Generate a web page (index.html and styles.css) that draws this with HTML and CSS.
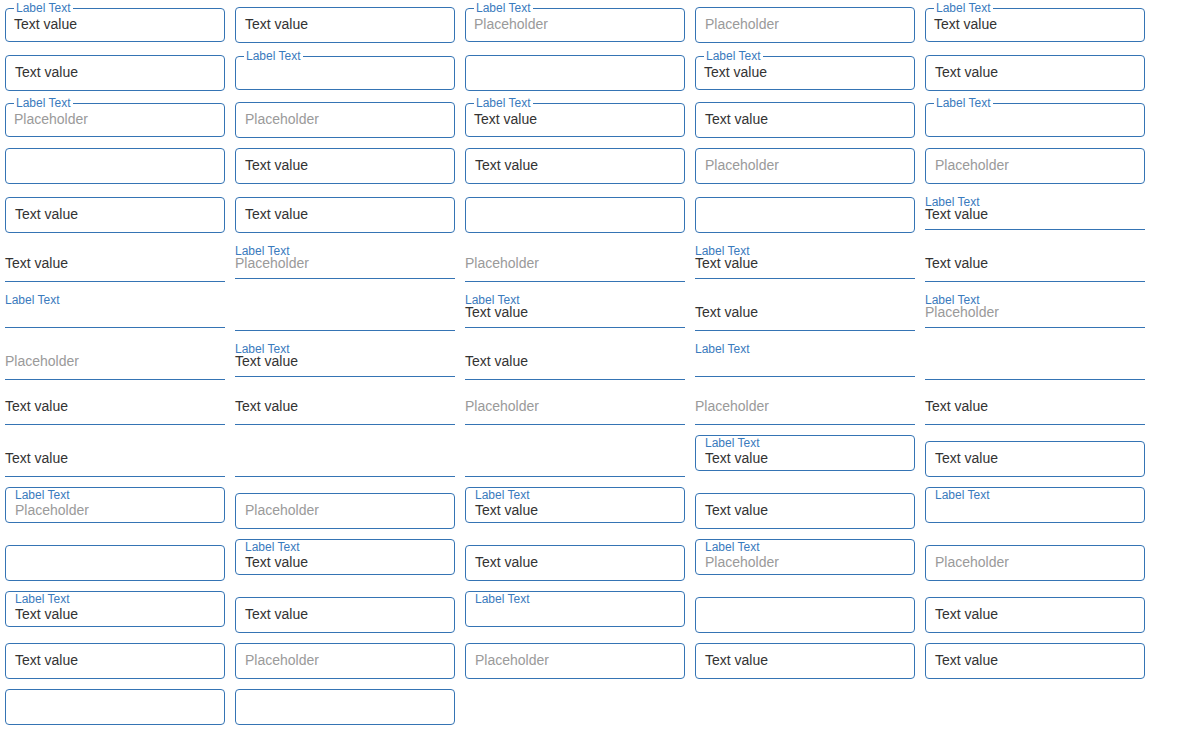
FILE: index.html
```html
<!DOCTYPE html>
<html lang="en">
<head>
<meta charset="utf-8">
<title>Text fields</title>
<link rel="stylesheet" href="styles.css">
</head>
<body>
<main class="grid">
  <!-- row 1 -->
  <fieldset class="f ol"><legend>Label Text</legend><div class="v">Text value</div></fieldset>
  <div class="f o"><div class="v">Text value</div></div>
  <fieldset class="f ol"><legend>Label Text</legend><div class="v ph">Placeholder</div></fieldset>
  <div class="f o"><div class="v ph">Placeholder</div></div>
  <fieldset class="f ol"><legend>Label Text</legend><div class="v">Text value</div></fieldset>
  <!-- row 2 -->
  <div class="f o"><div class="v">Text value</div></div>
  <fieldset class="f ol"><legend>Label Text</legend><div class="v"></div></fieldset>
  <div class="f o"><div class="v"></div></div>
  <fieldset class="f ol"><legend>Label Text</legend><div class="v">Text value</div></fieldset>
  <div class="f o"><div class="v">Text value</div></div>
  <!-- row 3 -->
  <fieldset class="f ol"><legend>Label Text</legend><div class="v ph">Placeholder</div></fieldset>
  <div class="f o"><div class="v ph">Placeholder</div></div>
  <fieldset class="f ol"><legend>Label Text</legend><div class="v">Text value</div></fieldset>
  <div class="f o"><div class="v">Text value</div></div>
  <fieldset class="f ol"><legend>Label Text</legend><div class="v"></div></fieldset>
  <!-- row 4 -->
  <div class="f o"><div class="v"></div></div>
  <div class="f o"><div class="v">Text value</div></div>
  <div class="f o"><div class="v">Text value</div></div>
  <div class="f o"><div class="v ph">Placeholder</div></div>
  <div class="f o"><div class="v ph">Placeholder</div></div>
  <!-- row 5 -->
  <div class="f o"><div class="v">Text value</div></div>
  <div class="f o"><div class="v">Text value</div></div>
  <div class="f o"><div class="v"></div></div>
  <div class="f o"><div class="v"></div></div>
  <div class="f ul"><label class="lb">Label Text</label><div class="v">Text value</div></div>
  <!-- row 6 -->
  <div class="f u"><div class="v">Text value</div></div>
  <div class="f ul"><label class="lb">Label Text</label><div class="v ph">Placeholder</div></div>
  <div class="f u"><div class="v ph">Placeholder</div></div>
  <div class="f ul"><label class="lb">Label Text</label><div class="v">Text value</div></div>
  <div class="f u"><div class="v">Text value</div></div>
  <!-- row 7 -->
  <div class="f ul"><label class="lb">Label Text</label><div class="v"></div></div>
  <div class="f u"><div class="v"></div></div>
  <div class="f ul"><label class="lb">Label Text</label><div class="v">Text value</div></div>
  <div class="f u"><div class="v">Text value</div></div>
  <div class="f ul"><label class="lb">Label Text</label><div class="v ph">Placeholder</div></div>
  <!-- row 8 -->
  <div class="f u"><div class="v ph">Placeholder</div></div>
  <div class="f ul"><label class="lb">Label Text</label><div class="v">Text value</div></div>
  <div class="f u"><div class="v">Text value</div></div>
  <div class="f ul"><label class="lb">Label Text</label><div class="v"></div></div>
  <div class="f u"><div class="v"></div></div>
  <!-- row 9 -->
  <div class="f u"><div class="v">Text value</div></div>
  <div class="f u"><div class="v">Text value</div></div>
  <div class="f u"><div class="v ph">Placeholder</div></div>
  <div class="f u"><div class="v ph">Placeholder</div></div>
  <div class="f u"><div class="v">Text value</div></div>
  <!-- row 10 -->
  <div class="f u"><div class="v">Text value</div></div>
  <div class="f u"><div class="v"></div></div>
  <div class="f u"><div class="v"></div></div>
  <div class="f il"><label class="lb">Label Text</label><div class="v">Text value</div></div>
  <div class="f o"><div class="v">Text value</div></div>
  <!-- row 11 -->
  <div class="f il"><label class="lb">Label Text</label><div class="v ph">Placeholder</div></div>
  <div class="f o"><div class="v ph">Placeholder</div></div>
  <div class="f il"><label class="lb">Label Text</label><div class="v">Text value</div></div>
  <div class="f o"><div class="v">Text value</div></div>
  <div class="f il"><label class="lb">Label Text</label><div class="v"></div></div>
  <!-- row 12 -->
  <div class="f o"><div class="v"></div></div>
  <div class="f il"><label class="lb">Label Text</label><div class="v">Text value</div></div>
  <div class="f o"><div class="v">Text value</div></div>
  <div class="f il"><label class="lb">Label Text</label><div class="v ph">Placeholder</div></div>
  <div class="f o"><div class="v ph">Placeholder</div></div>
  <!-- row 13 -->
  <div class="f il"><label class="lb">Label Text</label><div class="v">Text value</div></div>
  <div class="f o"><div class="v">Text value</div></div>
  <div class="f il"><label class="lb">Label Text</label><div class="v"></div></div>
  <div class="f o"><div class="v"></div></div>
  <div class="f o"><div class="v">Text value</div></div>
  <!-- row 14 -->
  <div class="f o"><div class="v">Text value</div></div>
  <div class="f o"><div class="v ph">Placeholder</div></div>
  <div class="f o"><div class="v ph">Placeholder</div></div>
  <div class="f o"><div class="v">Text value</div></div>
  <div class="f o"><div class="v">Text value</div></div>
  <!-- row 15 -->
  <div class="f o"><div class="v"></div></div>
  <div class="f o"><div class="v"></div></div>
</main>
</body>
</html>
```
FILE: styles.css
```css
html, body {
  margin: 0;
  padding: 0;
  background: #ffffff;
}

body {
  font-family: "Liberation Sans", Arial, sans-serif;
  color: #333333;
}

.grid {
  display: grid;
  grid-template-columns: repeat(5, 220px);
  column-gap: 10px;
  row-gap: 10px;
  align-items: last baseline;
  padding: 5.5px 5px 5px;
}

.f {
  box-sizing: border-box;
  min-width: 0;
  width: 220px;
}

.v {
  font-size: 14px;
  color: #333333;
  white-space: nowrap;
}

.v:empty::before {
  content: "\200b";
}

.v.ph {
  color: #9a9a9a;
}

.lb {
  display: block;
  font-size: 12px;
  line-height: 13px;
  color: #3a7bbd;
  white-space: nowrap;
}

/* outlined, no label */
.o {
  border: 1px solid #3574b4;
  border-radius: 4px;
  padding: 0 9px 1px;
}

.o .v {
  line-height: 33px;
}

/* outlined, notched legend */
.ol {
  margin: -3.5px 0 0;
  border: 1px solid #3574b4;
  border-radius: 4px;
  padding: 0 8px 7px;
}

.ol legend {
  font-size: 12px;
  line-height: 13px;
  padding: 0 2px;
  color: #3a7bbd;
}

.ol .v {
  line-height: 19px;
}

/* underline, no label */
.u {
  padding: 8px 0 10px;
  border-bottom: 1px solid #3574b4;
}

.u .v {
  line-height: 16px;
}

/* underline, label above */
.ul {
  padding: 2px 0 9px;
  border-bottom: 1px solid #3574b4;
}

.ul .v {
  line-height: 11px;
}

/* outlined, label inside */
.il {
  border: 1px solid #3574b4;
  border-radius: 4px;
  padding: 1px 9px 4px;
}

.il .v {
  line-height: 16px;
}
```
